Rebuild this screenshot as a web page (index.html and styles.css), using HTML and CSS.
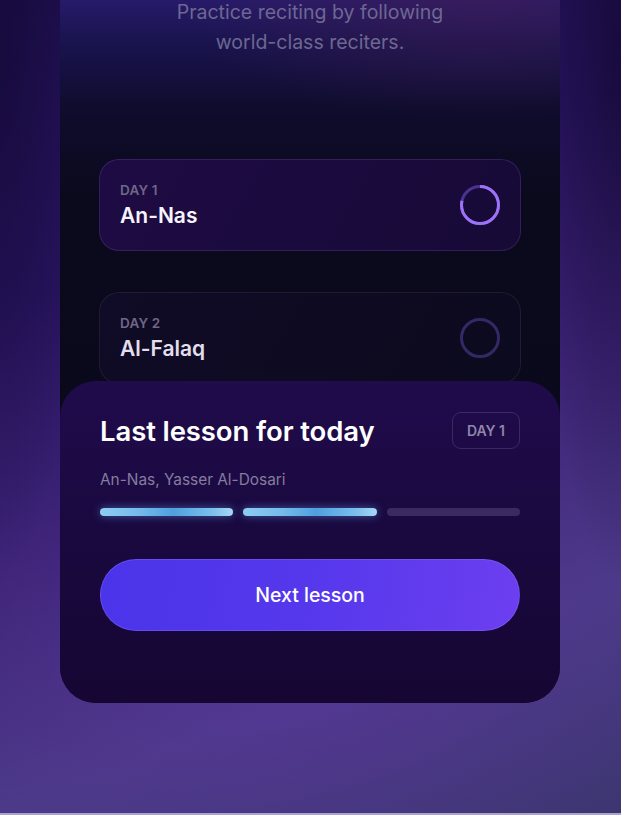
FILE: index.html
```html
<!DOCTYPE html>
<html lang="en">
<head>
<meta charset="utf-8">
<title>Daily lessons</title>
<link rel="stylesheet" href="styles.css">
</head>
<body>
<div class="stage">
  <div class="phone">
    <p class="intro">Practice reciting by following<br>world-class reciters.</p>
    <div class="lessons">
      <div class="lesson lesson--active">
        <div class="lesson__text">
          <span class="lesson__day">DAY 1</span>
          <span class="lesson__name">An-Nas</span>
        </div>
        <svg class="ring" width="42" height="42" viewBox="0 0 42 42">
          <circle cx="21" cy="21" r="18.5" fill="none" stroke="#4a3292" stroke-width="3"/>
          <circle cx="21" cy="21" r="18.5" fill="none" stroke="#9c72f6" stroke-width="3" stroke-dasharray="91 200" transform="rotate(-90 21 21)"/>
        </svg>
      </div>
      <div class="lesson lesson--idle">
        <div class="lesson__text">
          <span class="lesson__day">DAY 2</span>
          <span class="lesson__name">Al-Falaq</span>
        </div>
        <svg class="ring" width="42" height="42" viewBox="0 0 42 42">
          <circle cx="21" cy="21" r="18.5" fill="none" stroke="#352866" stroke-width="3"/>
        </svg>
      </div>
    </div>
    <div class="sheet">
      <div class="sheet__head">
        <h2 class="sheet__title">Last lesson for today</h2>
        <span class="badge">DAY 1</span>
      </div>
      <p class="sheet__sub">An-Nas, Yasser Al-Dosari</p>
      <div class="bars">
        <span class="bar bar--done"></span>
        <span class="bar bar--done"></span>
        <span class="bar"></span>
      </div>
      <button class="cta">Next lesson</button>
    </div>
  </div>
</div>
</body>
</html>
```
FILE: styles.css
```css
* { box-sizing: border-box; }
html, body { margin: 0; padding: 0; }
body {
  font-family: "Inter", "Noto Sans", sans-serif;
  background: #2a1a5a;
}
.stage {
  width: 621px;
  height: 815px;
  overflow: hidden;
  border-bottom: 2px solid #aaa3d2;
  background:
    radial-gradient(ellipse 380px 260px at 300px 660px, rgba(100, 50, 170, 0.35), rgba(100, 50, 170, 0) 100%),
    radial-gradient(ellipse 90px 520px at 0px 60px, rgba(12, 4, 35, 0.45), rgba(12, 4, 35, 0) 100%),
    radial-gradient(ellipse 90px 520px at 621px 60px, rgba(12, 4, 35, 0.55), rgba(12, 4, 35, 0) 100%),
    linear-gradient(160deg, #1f0f50 0%, #281460 30%, #3e2478 55%, #4c3a88 78%, #3c3670 100%);
}
.phone {
  width: 500px;
  height: 703px;
  margin-left: 60px;
  border-radius: 0 0 36px 36px;
  overflow: hidden;
  display: flex;
  flex-direction: column;
  background:
    radial-gradient(ellipse 300px 120px at 420px 0px, rgba(70, 30, 80, 0.5), rgba(70, 30, 80, 0) 100%),
    linear-gradient(180deg, #261a6a 0px, #1a1450 40px, #0f0c2c 110px, #0a0a1c 200px, #08081a 100%);
}
.intro {
  margin: -3px 0 0;
  text-align: center;
  font-size: 19.5px;
  line-height: 30px;
  color: #6d6892;
}
.lessons {
  display: flex;
  flex-direction: column;
  gap: 41px;
  padding: 102px 39px 0;
}
.lesson {
  height: 92px;
  display: flex;
  align-items: center;
  justify-content: space-between;
  padding: 0 19px 0 20px;
  border-radius: 20px;
}
.lesson--active {
  background: linear-gradient(120deg, #1e0b44 0%, #1a0a3c 60%, #170a36 100%);
  border: 1px solid rgba(150, 110, 230, 0.2);
}
.lesson--idle {
  background: linear-gradient(120deg, #100b26 0%, #0c0a1e 100%);
  border: 1px solid rgba(255, 255, 255, 0.07);
}
.lesson__text {
  display: flex;
  flex-direction: column;
  gap: 5px;
}
.lesson__day {
  font-size: 13.5px;
  line-height: 16px;
  font-weight: 600;
  color: #6f6788;
  letter-spacing: 0.2px;
}
.lesson__name {
  font-size: 21px;
  line-height: 26px;
  font-weight: 600;
  color: #f6f4fb;
}
.lesson--idle .lesson__name { color: #e2deec; }
.ring { display: block; }
.sheet {
  position: relative;
  z-index: 1;
  margin-top: -3px;
  flex: 1;
  border-radius: 36px 36px 0 0;
  background: linear-gradient(180deg, #200b4b 0%, #1a0940 45%, #150633 100%);
  padding: 31px 40px 0;
}
.sheet__head {
  display: flex;
  align-items: center;
  justify-content: space-between;
  height: 37px;
}
.sheet__title {
  margin: 0;
  font-size: 27.5px;
  font-weight: 600;
  color: #ffffff;
  letter-spacing: -0.1px;
}
.badge {
  height: 37px;
  padding: 0 14px;
  display: flex;
  align-items: center;
  border: 1px solid rgba(255, 255, 255, 0.13);
  border-radius: 9px;
  font-size: 14px;
  font-weight: 600;
  color: #8e87a8;
}
.sheet__sub {
  margin: 21px 0 0;
  font-size: 15.4px;
  line-height: 20px;
  color: #847d9f;
}
.bars {
  display: grid;
  grid-template-columns: repeat(3, 1fr);
  gap: 10px;
  margin-top: 18px;
}
.bar {
  height: 8px;
  border-radius: 4px;
  background: #3a2a60;
}
.bar--done {
  background: linear-gradient(90deg, #8fcdf2 0%, #74baea 30%, #4fa0df 55%, #7dc0ec 85%, #a6d8f5 100%);
  box-shadow: 0 0 8px rgba(90, 160, 240, 0.55);
}
.cta {
  display: block;
  width: 100%;
  height: 72px;
  margin-top: 43px;
  border: 1px solid rgba(140, 120, 255, 0.35);
  border-radius: 36px;
  background: linear-gradient(100deg, #4a34e9 0%, #5638ec 50%, #6c3ff0 100%);
  color: #ffffff;
  font-family: inherit;
  font-size: 19.5px;
  font-weight: 500;
  cursor: pointer;
}
```
